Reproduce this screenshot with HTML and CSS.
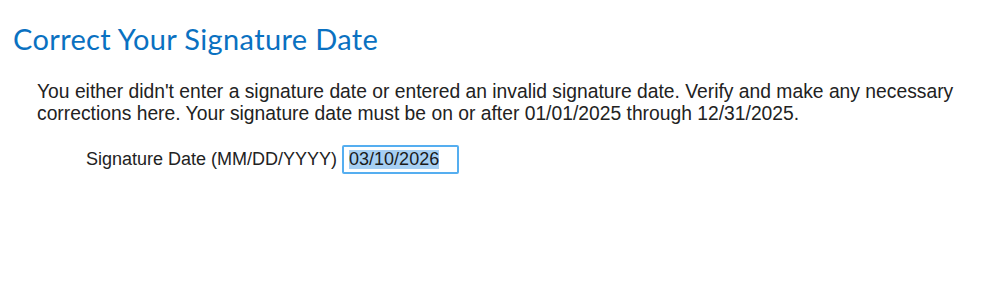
FILE: index.html
```html
<!DOCTYPE html>
<html>
<head>
<meta charset="utf-8">
<link rel="stylesheet" href="styles.css">
</head>
<body>
<div class="page">
  <h1 class="title">Correct Your Signature Date</h1>
  <p class="intro">You either didn't enter a signature date or entered an invalid signature date. Verify and make any necessary corrections here. Your signature date must be on or after 01/01/2025 through 12/31/2025.</p>
  <div class="field">
    <label class="label" for="sigdate">Signature Date (MM/DD/YYYY)</label>
    <span class="input" id="sigdate"><span class="sel">03/10/2026</span></span>
  </div>
</div>
</body>
</html>
```
FILE: styles.css
```css
html, body {
  margin: 0;
  padding: 0;
  background: #ffffff;
}
.page {
  padding: 21px 0 0 13px;
}
.title {
  margin: 0;
  font-family: Lato, "Open Sans", sans-serif;
  font-weight: 400;
  font-size: 29px;
  line-height: 35px;
  color: #0a71c1;
  letter-spacing: 0.35px;
}
.intro {
  margin: 25px 0 0 24px;
  width: 935px;
  font-family: "Liberation Sans", Arial, sans-serif;
  font-size: 19.3px;
  line-height: 22px;
  color: #222222;
}
.field {
  display: flex;
  align-items: center;
  margin: 20px 0 0 73px;
}
.label {
  font-family: "Liberation Sans", Arial, sans-serif;
  font-size: 18px;
  color: #222222;
  margin-right: 5px;
}
.input {
  box-sizing: border-box;
  width: 117px;
  height: 29px;
  border: 2px solid #55aef0;
  border-radius: 2px;
  padding: 0 0 0 5px;
  display: flex;
  align-items: center;
  font-family: "Liberation Sans", Arial, sans-serif;
  font-size: 18px;
  color: #1a1a1a;
}
.sel {
  background: #a6cff3;
  line-height: 19px;
}
```
